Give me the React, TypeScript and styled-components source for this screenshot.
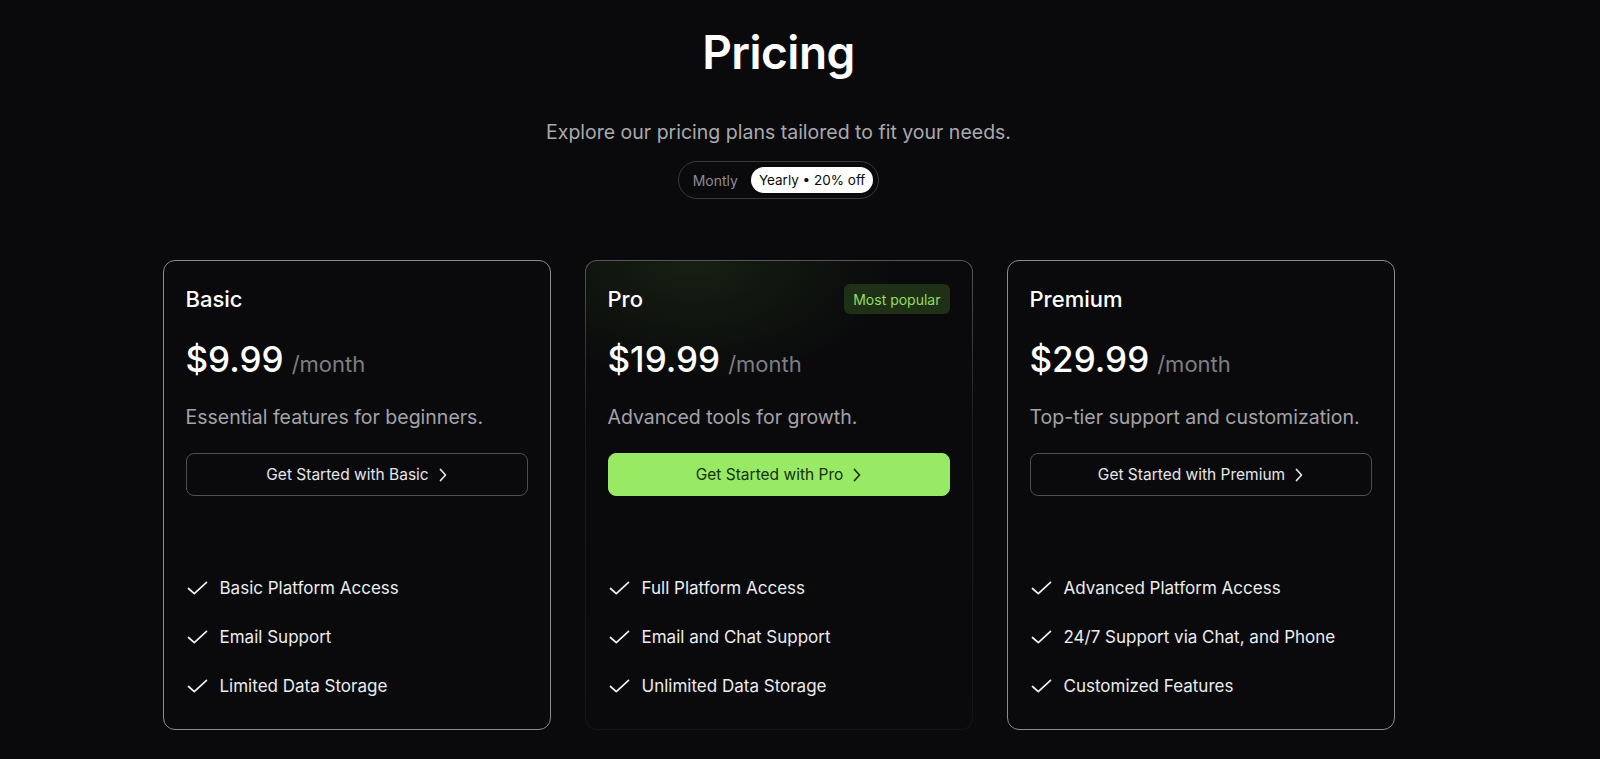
import React from "react";
import styled, { createGlobalStyle, css } from "styled-components";

const GlobalStyle = createGlobalStyle`
  html, body {
    margin: 0;
    padding: 0;
    background: #0a0a0c;
  }
  body {
    font-family: Inter, "Noto Sans", "Liberation Sans", sans-serif;
    color: #ffffff;
    -webkit-font-smoothing: antialiased;
  }
  * { box-sizing: border-box; }
`;

const Page = styled.main`
  min-height: 759px;
  display: flex;
  flex-direction: column;
  align-items: center;
  padding: 23px 43px 0 0;
`;

const Title = styled.h1`
  margin: 0;
  font-size: 46px;
  line-height: 58px;
  font-weight: 600;
  letter-spacing: -0.5px;
  color: #ffffff;
`;

const Subtitle = styled.p`
  margin: 39px 0 0;
  font-size: 19.5px;
  line-height: 24px;
  color: #a9a9ad;
`;

const Toggle = styled.div`
  margin-top: 17px;
  height: 38px;
  display: flex;
  align-items: center;
  gap: 3px;
  padding: 0 5px 0 4px;
  border: 1px solid #3a3a3e;
  border-radius: 999px;
`;

const ToggleOption = styled.button<{ $active?: boolean }>`
  height: 26px;
  padding: 0 10px;
  border: none;
  border-radius: 999px;
  font-family: inherit;
  font-size: 14px;
  cursor: pointer;
  background: transparent;
  color: #8d8d92;
  ${(p) =>
    p.$active &&
    css`
      padding: 0 8px;
      font-size: 13.5px;
      background: #ffffff;
      color: #0a0a0c;
    `}
`;

const Cards = styled.section`
  margin-top: 61px;
  display: grid;
  grid-template-columns: repeat(3, 388px);
  gap: 34px;
`;

const Card = styled.article<{ $featured?: boolean }>`
  display: flex;
  flex-direction: column;
  padding: 23px 22px 31px;
  border-radius: 12px;
  border: 1px solid #8c8c90;
  background: #0a0a0c;
  ${(p) =>
    p.$featured &&
    css`
      border: 1px solid transparent;
      background:
        radial-gradient(ellipse 200px 120px at 28% 0%, rgba(110, 190, 60, 0.12), transparent 100%) padding-box,
        linear-gradient(#0a0a0c, #0a0a0c) padding-box,
        linear-gradient(180deg, #56565a 0%, #1c1c1f 35%, #141416 100%) border-box;
    `}
`;

const CardHeader = styled.div`
  height: 30px;
  display: flex;
  align-items: center;
  justify-content: space-between;
`;

const PlanName = styled.h2`
  margin: 0;
  font-size: 22px;
  line-height: 28px;
  font-weight: 500;
  color: #ffffff;
`;

const Badge = styled.span`
  height: 30px;
  display: inline-flex;
  align-items: center;
  padding: 0 9px;
  border-radius: 6px;
  background: #1e3016;
  color: #93dc5f;
  font-size: 14px;
`;

const PriceRow = styled.div`
  margin-top: 24px;
  height: 42px;
  line-height: 42px;
  white-space: nowrap;
`;

const Amount = styled.span`
  font-size: 35px;
  font-weight: 500;
  color: #ffffff;
`;

const Period = styled.span`
  margin-left: 8px;
  font-size: 22px;
  color: #7e7e83;
`;

const Description = styled.p`
  margin: 25px 0 0;
  font-size: 19.5px;
  line-height: 24px;
  color: #a3a3a8;
`;

const CtaButton = styled.button<{ $primary?: boolean }>`
  margin-top: 24px;
  height: 43px;
  width: 100%;
  display: flex;
  align-items: center;
  justify-content: center;
  gap: 10px;
  border-radius: 8px;
  border: 1px solid #4e4e52;
  background: transparent;
  color: #e6e6e8;
  font-family: inherit;
  font-size: 15.5px;
  cursor: pointer;
  ${(p) =>
    p.$primary &&
    css`
      border-color: #98ea64;
      background: #98ea64;
      color: #16300c;
    `}
`;

const Features = styled.ul`
  list-style: none;
  margin: 80px 0 0;
  padding: 0;
  display: flex;
  flex-direction: column;
  gap: 25px;
`;

const Feature = styled.li`
  display: flex;
  align-items: center;
  gap: 12px;
  font-size: 17px;
  line-height: 24px;
  color: #ececee;
`;

const CheckIcon = () => (
  <svg width="22" height="14" viewBox="0 0 22 14" fill="none">
    <path
      d="M2.5 7.5 L8.3 12.6 L20.5 1.4"
      stroke="#f2f2f2"
      strokeWidth="1.7"
      strokeLinecap="round"
      strokeLinejoin="round"
    />
  </svg>
);

const ChevronIcon = () => (
  <svg width="8" height="14" viewBox="0 0 8 14" fill="none">
    <path
      d="M1.5 1.5 L6.5 7 L1.5 12.5"
      stroke="currentColor"
      strokeWidth="1.7"
      strokeLinecap="round"
      strokeLinejoin="round"
    />
  </svg>
);

type Plan = {
  name: string;
  price: string;
  description: string;
  features: string[];
  featured?: boolean;
};

const plans: Plan[] = [
  {
    name: "Basic",
    price: "$9.99",
    description: "Essential features for beginners.",
    features: ["Basic Platform Access", "Email Support", "Limited Data Storage"],
  },
  {
    name: "Pro",
    price: "$19.99",
    description: "Advanced tools for growth.",
    features: ["Full Platform Access", "Email and Chat Support", "Unlimited Data Storage"],
    featured: true,
  },
  {
    name: "Premium",
    price: "$29.99",
    description: "Top-tier support and customization.",
    features: ["Advanced Platform Access", "24/7 Support via Chat, and Phone", "Customized Features"],
  },
];

export default function App() {
  return (
    <>
      <GlobalStyle />
      <Page>
        <Title>Pricing</Title>
        <Subtitle>Explore our pricing plans tailored to fit your needs.</Subtitle>
        <Toggle>
          <ToggleOption>Montly</ToggleOption>
          <ToggleOption $active>Yearly • 20% off</ToggleOption>
        </Toggle>
        <Cards>
          {plans.map((plan) => (
            <Card key={plan.name} $featured={plan.featured}>
              <CardHeader>
                <PlanName>{plan.name}</PlanName>
                {plan.featured && <Badge>Most popular</Badge>}
              </CardHeader>
              <PriceRow>
                <Amount>{plan.price}</Amount>
                <Period>/month</Period>
              </PriceRow>
              <Description>{plan.description}</Description>
              <CtaButton $primary={plan.featured}>
                Get Started with {plan.name}
                <ChevronIcon />
              </CtaButton>
              <Features>
                {plan.features.map((f) => (
                  <Feature key={f}>
                    <CheckIcon />
                    {f}
                  </Feature>
                ))}
              </Features>
            </Card>
          ))}
        </Cards>
      </Page>
    </>
  );
}
